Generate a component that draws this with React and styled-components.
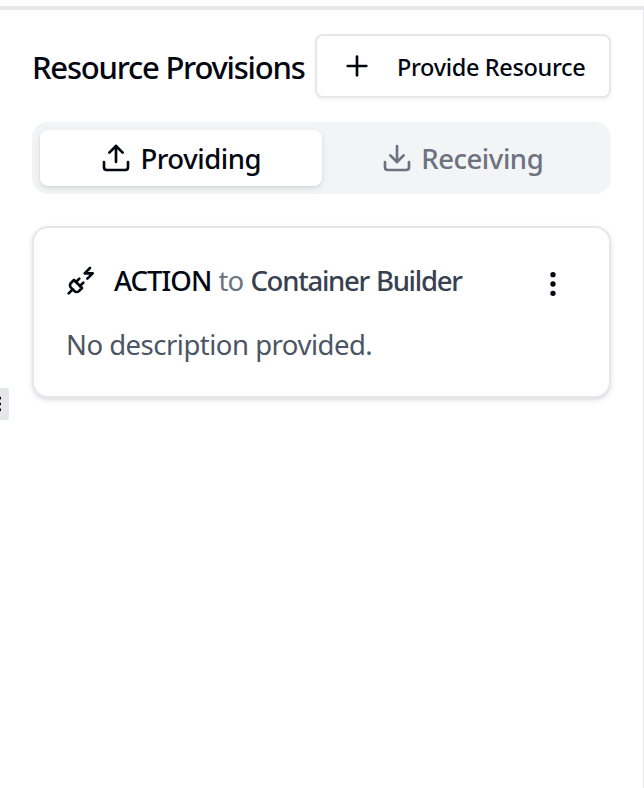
import React from "react";
import styled, { createGlobalStyle } from "styled-components";
import { Plus, Upload, Download, EllipsisVertical, GripVertical } from "lucide-react";

const GlobalStyle = createGlobalStyle`
  *, *::before, *::after { box-sizing: border-box; }
  body {
    margin: 0;
    background: #fff;
    color: #030712;
    font-family: "Noto Sans", "Open Sans", sans-serif;
    overflow: hidden;
  }
  button { font: inherit; color: inherit; cursor: pointer; }
  svg { flex-shrink: 0; display: block; }
`;

const Page = styled.div`
  position: relative;
  height: 788px;
  padding-top: 6px;
  display: flex;
  flex-direction: column;
  overflow: hidden;
`;

const TopRule = styled.div`
  flex: none;
  height: 4px;
  background: #e5e7eb;
`;

const Panel = styled.main`
  flex: 1;
  padding: 24px 32px 0;
  border-right: 1px solid #e5e7eb;
`;

const Header = styled.header`
  display: flex;
  align-items: center;
  justify-content: space-between;
  height: 64px;
  width: 579px;
`;

const Title = styled.h2`
  margin: 2px 0 0;
  font-size: 31px;
  line-height: 40px;
  font-weight: 500;
  letter-spacing: -1.22px;
  white-space: nowrap;
`;

const ProvideButton = styled.button`
  display: flex;
  align-items: center;
  gap: 24px;
  width: 296px;
  height: 64px;
  padding: 0 0 0 24px;
  border: 2px solid #e5e7eb;
  border-radius: 8px;
  background: #fff;
  box-shadow: 0 2px 4px rgba(0, 0, 0, 0.05);
  font-size: 23.5px;
  font-weight: 500;
  letter-spacing: -0.35px;
  white-space: nowrap;
`;

const ButtonLabel = styled.span`
  margin-top: 2px;
`;

const TabList = styled.div`
  display: flex;
  width: 579px;
  height: 72px;
  margin-top: 24px;
  padding: 8px;
  border-radius: 16px;
  background: #f3f4f6;
`;

const Tab = styled.button`
  flex: 1;
  display: flex;
  align-items: center;
  justify-content: center;
  gap: 8px;
  height: 56px;
  padding: 0;
  border: 0;
  border-radius: 8px;
  background: ${({ $active }) => ($active ? "#fff" : "transparent")};
  color: ${({ $active }) => ($active ? "#030712" : "#6b7280")};
  box-shadow: ${({ $active }) =>
    $active ? "0 2px 6px rgba(0,0,0,0.1), 0 2px 4px -2px rgba(0,0,0,0.1)" : "none"};
  font-size: 27.5px;
  font-weight: 500;
  letter-spacing: -0.45px;
`;

const Card = styled.article`
  width: 579px;
  height: 172px;
  margin-top: 32px;
  padding: 30px 32px;
  border: 2px solid #e5e7eb;
  border-radius: 16px;
  background: #fff;
  box-shadow: 0 2px 6px rgba(0, 0, 0, 0.1), 0 2px 4px -2px rgba(0, 0, 0, 0.1);
`;

const CardHeader = styled.div`
  display: flex;
  align-items: center;
  height: 48px;
`;

const CardTitle = styled.h3`
  flex: 1;
  margin: -2px 0 0 16px;
  font-size: 27.5px;
  line-height: 40px;
  font-weight: 500;
  letter-spacing: -0.95px;
  word-spacing: 1px;
  white-space: nowrap;
`;

const Connector = styled.span`
  color: #6b7280;
  font-weight: 400;
`;

const Target = styled.span`
  color: #374151;
  letter-spacing: -1.25px;
`;

const MenuButton = styled.button`
  display: flex;
  padding: 0;
  margin: 4px 8px 0 0;
  border: 0;
  background: none;
`;

const Description = styled.p`
  margin: 19px 0 0;
  color: #4b5563;
  font-size: 27.5px;
  line-height: 40px;
  letter-spacing: -0.5px;
`;

const ResizeHandle = styled.div`
  position: absolute;
  left: -15px;
  top: 388px;
  width: 24px;
  height: 32px;
  display: flex;
  align-items: center;
  justify-content: center;
  border-radius: 2px;
  background: #e5e7eb;
`;

const PlugZap = styled.svg`
  width: 32px;
  height: 32px;
  margin-top: -4px;
  fill: none;
  stroke: currentColor;
  stroke-width: 2;
  stroke-linecap: round;
  stroke-linejoin: round;
`;

const PlugZapIcon = () => (
  <PlugZap viewBox="0 0 24 24">
    <path d="M6.3 20.3a2.4 2.4 0 0 0 3.4 0L12 18l-6-6-2.3 2.3a2.4 2.4 0 0 0 0 3.4Z" />
    <path d="m2 22 3-3" />
    <path d="M7.5 13.5 10 11" />
    <path d="M10.5 16.5 13 14" />
    <path d="m18 3-4 4h6l-4 4" />
  </PlugZap>
);

export default function App() {
  return (
    <Page>
      <GlobalStyle />
      <TopRule />
      <Panel>
        <Header>
          <Title>Resource Provisions</Title>
          <ProvideButton>
            <Plus size={32} />
            <ButtonLabel>Provide Resource</ButtonLabel>
          </ProvideButton>
        </Header>
        <TabList>
          <Tab $active>
            <Upload size={32} />
            <span>Providing</span>
          </Tab>
          <Tab>
            <Download size={32} />
            <span>Receiving</span>
          </Tab>
        </TabList>
        <Card>
          <CardHeader>
            <PlugZapIcon />
            <CardTitle>
              ACTION <Connector>to</Connector> <Target>Container Builder</Target>
            </CardTitle>
            <MenuButton aria-label="More actions">
              <EllipsisVertical size={32} />
            </MenuButton>
          </CardHeader>
          <Description>No description provided.</Description>
        </Card>
      </Panel>
      <ResizeHandle>
        <GripVertical size={20} />
      </ResizeHandle>
    </Page>
  );
}
